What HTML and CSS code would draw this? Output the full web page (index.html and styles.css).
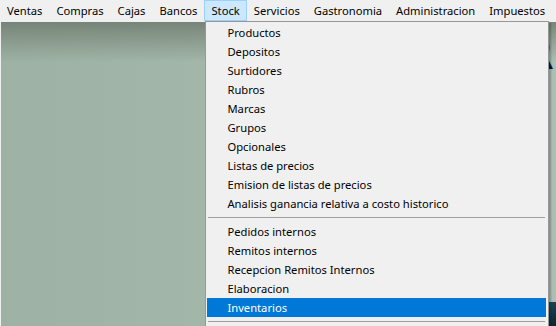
FILE: index.html
```html
<!DOCTYPE html>
<html>
<head>
<meta charset="utf-8">
<link rel="stylesheet" href="styles.css">
</head>
<body>
<div class="app">
  <nav class="menubar">
    <span class="mi">Ventas</span>
    <span class="mi">Compras</span>
    <span class="mi">Cajas</span>
    <span class="mi">Bancos</span>
    <span class="mi mi-open">Stock
      <div class="dropdown">
        <div class="di">Productos</div>
        <div class="di">Depositos</div>
        <div class="di">Surtidores</div>
        <div class="di">Rubros</div>
        <div class="di">Marcas</div>
        <div class="di">Grupos</div>
        <div class="di">Opcionales</div>
        <div class="di">Listas de precios</div>
        <div class="di">Emision de listas de precios</div>
        <div class="di">Analisis ganancia relativa a costo historico</div>
        <div class="sep"></div>
        <div class="di">Pedidos internos</div>
        <div class="di">Remitos internos</div>
        <div class="di">Recepcion Remitos Internos</div>
        <div class="di">Elaboracion</div>
        <div class="di di-active">Inventarios</div>
        <div class="sep"></div>
      </div>
    </span>
    <span class="mi">Servicios</span>
    <span class="mi">Gastronomia</span>
    <span class="mi">Administracion</span>
    <span class="mi">Impuestos</span>
  </nav>
  <main class="desktop">
    <span class="logo-letter">R</span>
    <span class="logo-corner"></span>
  </main>
</div>
</body>
</html>
```
FILE: styles.css
```css
html, body {
  margin: 0;
  padding: 0;
  width: 556px;
  height: 326px;
  overflow: hidden;
  background: #f0f0f0;
}
.app {
  display: flex;
  flex-direction: column;
  height: 326px;
  font-family: "Noto Sans", "Open Sans", sans-serif;
  font-size: 11.2px;
  color: #000;
}
.menubar {
  display: flex;
  height: 22px;
  background: #f0f0f0;
  flex: none;
}
.mi {
  display: flex;
  align-items: center;
  height: 21px;
  padding: 0 6px;
  box-sizing: border-box;
  border: 1px solid transparent;
  white-space: nowrap;
}
.mi-open {
  position: relative;
  background: #cce8ff;
  border-color: #99d1ff;
}
.dropdown {
  position: absolute;
  top: 20px;
  left: 0;
  width: 344px;
  box-sizing: border-box;
  background: #f0f0f0;
  border: 1px solid #979797;
  padding: 1px 2px 20px 1px;
  box-shadow: 2px 2px 2px rgba(0,0,0,0.25);
  z-index: 10;
}
.di {
  height: 19px;
  line-height: 19px;
  padding-left: 20px;
  white-space: nowrap;
}
.di-active {
  background: #0078d7;
  color: #fff;
}
.sep {
  height: 1px;
  background: #a0a0a0;
  margin: 4px 1px 4px 1px;
}
.desktop {
  position: relative;
  flex: 1;
  margin-left: 1px;
  background:
    linear-gradient(to bottom, rgba(110,124,112,0.85) 0px, rgba(120,134,122,0.5) 20px, rgba(160,180,168,0) 40px),
    linear-gradient(to right, #9db2a4 0%, #a4b8ab 50%, #abbfb3 100%);
  overflow: hidden;
}
.logo-letter {
  position: absolute;
  left: 522px;
  top: 10px;
  font-family: "DejaVu Sans", sans-serif;
  font-weight: bold;
  font-size: 40px;
  color: #0b1a2c;
}
.logo-corner {
  position: absolute;
  left: 548px;
  top: 280px;
  width: 20px;
  height: 30px;
  background: linear-gradient(135deg, #1d4a5a 0%, #0c2430 60%, #cfe0e0 100%);
}
```
